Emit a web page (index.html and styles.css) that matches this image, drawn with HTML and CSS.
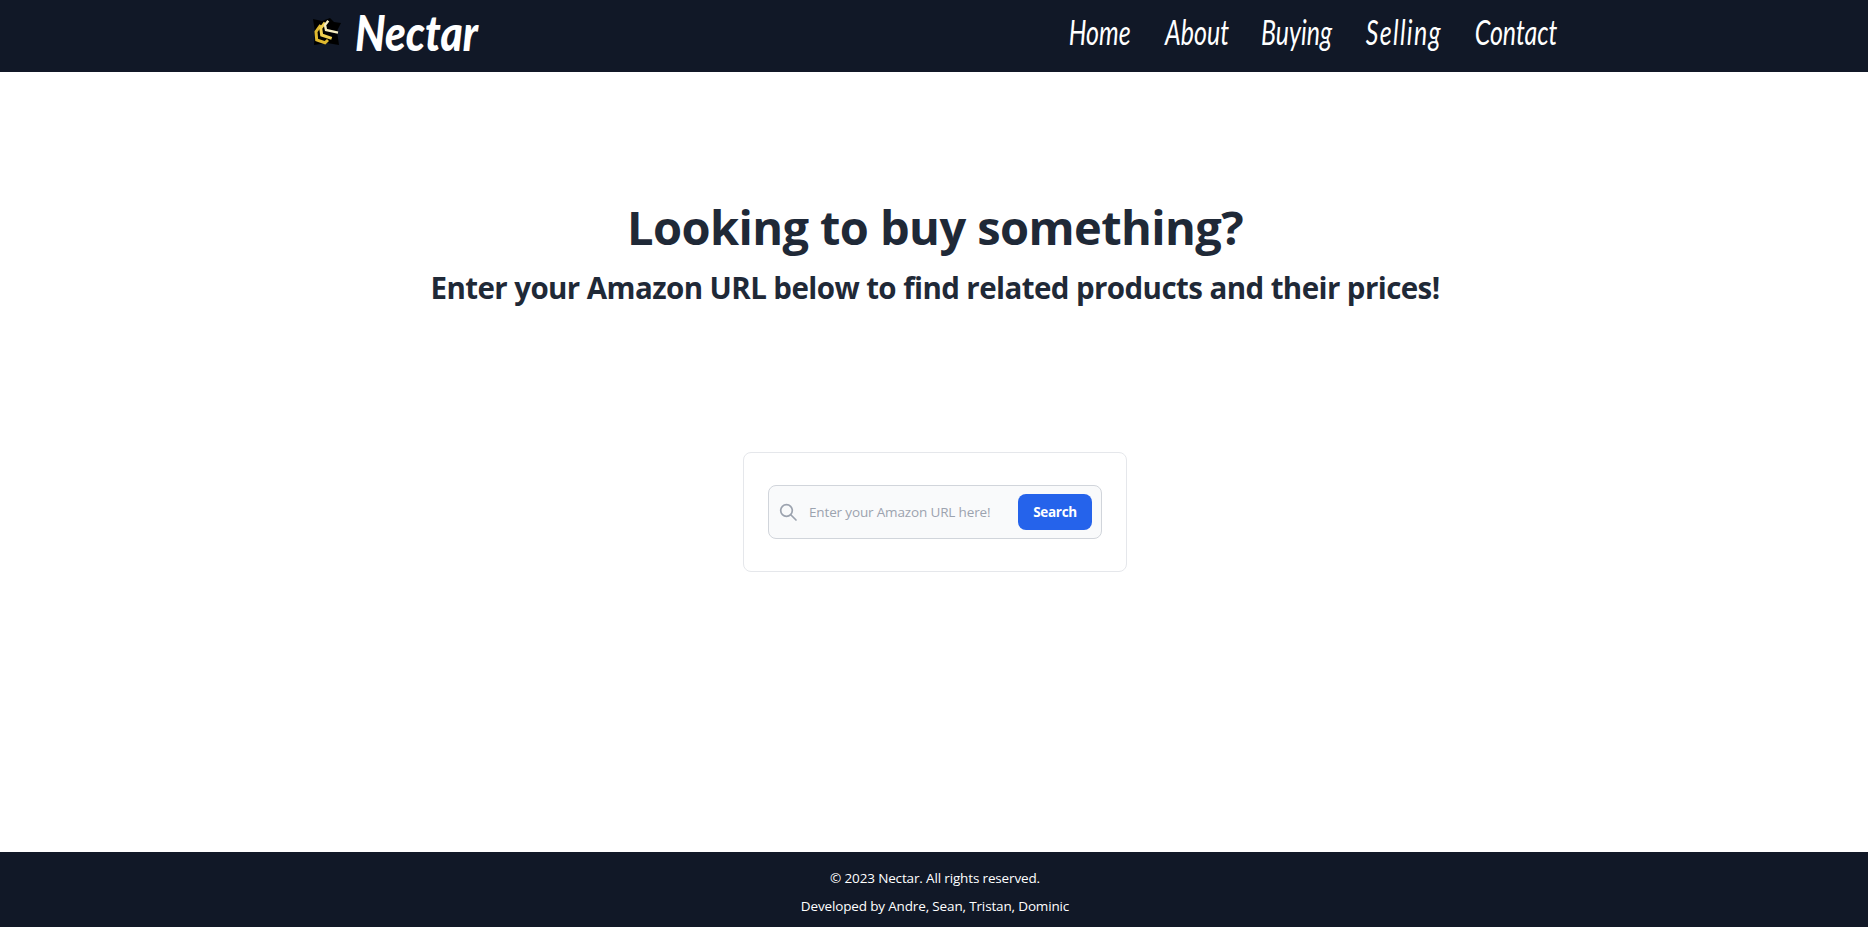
FILE: index.html
```html
<!DOCTYPE html>
<html lang="en">
<head>
<meta charset="utf-8">
<title>Nectar</title>
<link rel="stylesheet" href="styles.css">
</head>
<body>
<div class="page">
  <header class="navbar">
    <div class="nav-inner">
      <a class="brand" href="#">
        <svg class="logo" viewBox="0 0 28 28" width="28" height="28" aria-hidden="true">
          <path d="M0 1 L9 3 L17 0 L21 4 L28 5 L24 13 L26 27 L14 25 L1 27 L2 14 Z" fill="#000"/>
          <polyline points="7.7,7 3,13.7 3.7,22 12,24.7 15,22" fill="none" stroke="#e0b92f" stroke-width="3"/>
          <polyline points="12,4.7 7.7,10.3 8.7,17 18.7,20.3" fill="none" stroke="#f0d050" stroke-width="3"/>
          <polyline points="15.3,2.7 12,7 13,12 25,14.7" fill="none" stroke="#f5ecc0" stroke-width="2.4"/>
        </svg>
        <span class="brand-name">Nectar</span>
      </a>
      <nav class="nav-links">
        <a class="nav-link nav-home" href="#"><span>Home</span></a>
        <a class="nav-link nav-about" href="#"><span>About</span></a>
        <a class="nav-link nav-buying" href="#"><span>Buying</span></a>
        <a class="nav-link nav-selling" href="#"><span>Selling</span></a>
        <a class="nav-link nav-contact" href="#"><span>Contact</span></a>
      </nav>
    </div>
  </header>
  <main class="main">
    <h1 class="title">Looking to buy something?</h1>
    <h2 class="subtitle">Enter your Amazon URL below to find related products and their prices!</h2>
    <section class="card">
      <form class="search">
        <svg class="search-icon" viewBox="0 0 20 20" width="20" height="20" aria-hidden="true">
          <circle cx="8.5" cy="8.5" r="5.8" fill="none" stroke="#9ca3af" stroke-width="1.7"/>
          <path d="M13 13 L18 18" stroke="#9ca3af" stroke-width="1.7" stroke-linecap="round"/>
        </svg>
        <input class="search-input" type="text" placeholder="Enter your Amazon URL here!">
        <button class="search-btn" type="button">Search</button>
      </form>
    </section>
  </main>
  <footer class="footer">
    <p>© 2023 Nectar. All rights reserved.</p>
    <p>Developed by Andre, Sean, Tristan, Dominic</p>
  </footer>
</div>
</body>
</html>
```
FILE: styles.css
```css
* { box-sizing: border-box; }
html, body { margin: 0; height: 100%; }
body { font-family: "Open Sans", "Noto Sans", "Liberation Sans", sans-serif; background: #fff; color: #1f2937; }
.page { height: 927px; display: flex; flex-direction: column; overflow: hidden; }
.navbar { height: 72px; background: #111827; flex: none; }
.nav-inner { width: 1280px; margin: 0 auto; padding: 0 17px 8px 19px; height: 100%; display: flex; align-items: center; justify-content: space-between; }
.brand { display: flex; align-items: center; gap: 14px; color: #fff; text-decoration: none; }
.logo { display: block; }
.brand-name { display: inline-block; width: 122px; font-family: "Lato", sans-serif; font-style: italic; font-weight: 900; font-size: 50px; line-height: 60px; white-space: nowrap; transform: scaleX(.85); transform-origin: left center; }
.nav-links { display: flex; gap: 34px; }
.nav-link { display: flex; justify-content: center; color: #fff; text-decoration: none; font-family: "Lato", sans-serif; font-style: italic; font-weight: 400; font-size: 32px; line-height: 40px; white-space: nowrap; }
.nav-link span { display: inline-block; transform: scale(.78, 1.1); }
.nav-home { width: 62px; }
.nav-about { width: 63px; }
.nav-buying { width: 70px; }
.nav-selling { width: 75px; letter-spacing: 1.7px; }
.nav-contact { width: 82px; }
.main { flex: 1; display: flex; flex-direction: column; align-items: center; padding: 125px 0 0 2px; }
.title { margin: 0; font-size: 47px; line-height: 60px; letter-spacing: -.6px; font-weight: 700; color: #1f2937; }
.subtitle { margin: 13px 0 0; font-size: 29.5px; line-height: 36px; letter-spacing: -.58px; font-weight: 700; color: #1f2937; }
.card { margin-top: 146px; width: 384px; height: 120px; border: 1px solid #e5e7eb; border-radius: 8px; padding: 32px 24px; background: #fff; }
.search { height: 54px; display: flex; align-items: center; border: 1px solid #d1d5db; border-radius: 8px; background: #f9fafb; padding: 0 9px; }
.search-icon { flex: none; }
.search-input { flex: 1; min-width: 0; margin-left: 11px; border: 0; outline: 0; background: transparent; font: 13.5px "Open Sans", sans-serif; letter-spacing: -.15px; color: #111827; padding: 0; }
.search-input::placeholder { color: #9ca3af; opacity: 1; }
.search-btn { flex: none; width: 74px; height: 36px; border: 0; border-radius: 8px; background: #2563eb; color: #fff; font: 700 13.5px "Open Sans", sans-serif; letter-spacing: -.3px; }
.footer { height: 75px; flex: none; background: #111827; color: #fff; text-align: center; font-size: 13.5px; letter-spacing: -.15px; line-height: 20px; padding: 16px 0 0 2px; }
.footer p { margin: 0 0 8px; }
```
